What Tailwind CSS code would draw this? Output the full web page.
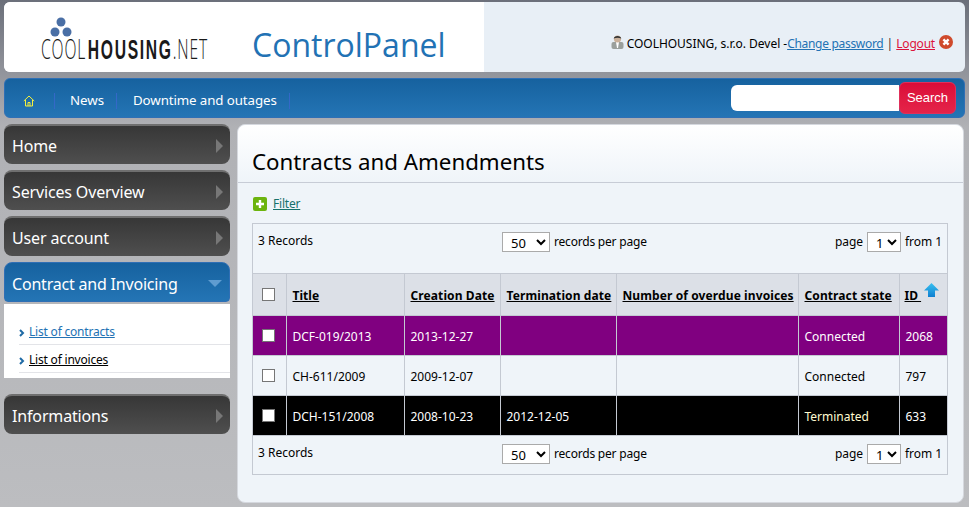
<!DOCTYPE html>
<html><head><meta charset="utf-8"><script src="https://cdn.jsdelivr.net/npm/@tailwindcss/browser@4"></script></head>
<body class="m-0 h-[507px] w-[969px] overflow-hidden bg-gradient-to-b from-[#6b6f7a] via-[#b0b1b5] via-[25%] to-[#bcbdc0] font-['Noto_Sans',sans-serif] text-[12px] text-black">
<div class="px-1 pt-0.5">
  <header class="flex h-[70px] overflow-hidden rounded-md bg-[#e8eff6]">
    <div class="relative flex w-[480px] shrink-0 items-start bg-white">
      <div class="relative ml-[37px] mt-[16px] h-[46px] w-[170px]">
        <svg class="absolute left-[8px] top-[-1px]" width="24" height="22" viewBox="0 0 24 22"><circle cx="12" cy="5" r="4.5" fill="#4a6fa5"/><circle cx="6" cy="15" r="4.5" fill="#4a6fa5"/><circle cx="18" cy="15" r="4.5" fill="#4a6fa5"/></svg>
        <div class="absolute left-0 top-[12px] origin-left scale-x-[0.56] whitespace-nowrap font-['Open_Sans',sans-serif] text-[28px] font-light leading-[36px] tracking-[1.5px] text-[#1a1a1a]">COOL<b class="ml-[3px] font-['Liberation_Sans',sans-serif] font-bold tracking-[3px]">HOUSING</b>.NET</div>
      </div>
      <div class="ml-[41px] mt-[20px] font-['Open_Sans',sans-serif] text-[32px] leading-[46px] text-[#2272b4]">ControlPanel</div>
    </div>
    <div class="flex flex-1 items-start justify-end pr-[12px] pt-[33px]">
      <svg class="mr-[3px] mt-[-1px]" width="13" height="16" viewBox="0 0 13 16"><rect x="0.5" y="8" width="12" height="7" rx="2" fill="#9a9f9c"/><path d="M5 8h3l-1 6h-1z" fill="#fff"/><circle cx="6.5" cy="5" r="3.6" fill="#c9b09a"/><path d="M2.7 4.5C3 1 10 1 10.3 4.5 8 3.4 5 3.4 2.7 4.5Z" fill="#333"/></svg>
      <span class="leading-[17px] tracking-[-0.03px]">COOLHOUSING, s.r.o. Devel -<a class="tracking-[-0.3px] text-[#2272b4] underline">Change password</a> <span class="text-[#333]">|</span> <a class="tracking-[-0.2px] text-[#dc143c] underline">Logout</a></span>
      <svg class="ml-[4px]" width="14" height="14" viewBox="0 0 14 14"><circle cx="7" cy="7" r="7" fill="#cf4a2c"/><path d="M4.4 4.4l5.2 5.2M9.6 4.4l-5.2 5.2" stroke="#fff" stroke-width="2.4"/></svg>
    </div>
  </header>

  <nav class="mt-[6px] flex h-10 items-center justify-between rounded-md border border-[#2f6fb5] bg-gradient-to-b from-[#16629f] to-[#2475b5] pr-2 text-white">
    <ul class="flex items-center pt-[5px] text-[13.3px]">
      <li class="flex h-4 w-[50px] items-center justify-center border-r border-[#3468c8] pr-[2px]">
        <svg width="12" height="12" viewBox="0 0 12 12" fill="none" stroke="#f5f03c" stroke-width="1"><path d="M0.8 6 6 1l5.2 5M2.5 5v6h7V5M5 11V7.5h2V11"/></svg>
      </li>
      <li class="flex h-4 w-[62px] items-center border-r border-[#3468c8] pl-[15px]">News</li>
      <li class="flex h-4 w-[173px] items-center border-r border-[#3468c8] pl-[16px] tracking-[-0.1px]">Downtime and outages</li>
    </ul>
    <div class="flex items-center">
      <input class="h-[26px] w-[168px] rounded-l-md bg-white" type="text" aria-label="Search">
      <button class="h-8 w-[57px] rounded-md border border-[#e0305a] bg-gradient-to-b from-[#da0c38] to-[#e52349] font-['Liberation_Sans',sans-serif] text-[13px] text-white">Search</button>
    </div>
  </nav>

  <div class="mt-[6px] flex gap-[7px]">
    <aside class="w-[226px] shrink-0 text-[16px] tracking-[-0.15px] text-white">
      <a class="flex h-10 items-center justify-between rounded-lg border-t-2 border-[#6f6f6f] bg-gradient-to-b from-[#373737] to-[#4f4f4f] pb-0 pl-2 pr-[7px] pt-px">Home<span class="h-0 w-0 border-y-[7px] border-l-[7px] border-y-transparent border-l-[#777]"></span></a>
      <a class="mt-[6px] flex h-10 items-center justify-between rounded-lg border-t-2 border-[#6f6f6f] bg-gradient-to-b from-[#373737] to-[#4f4f4f] pl-2 pr-[7px] pt-px">Services Overview<span class="h-0 w-0 border-y-[7px] border-l-[7px] border-y-transparent border-l-[#777]"></span></a>
      <a class="mt-[6px] flex h-10 items-center justify-between rounded-lg border-t-2 border-[#6f6f6f] bg-gradient-to-b from-[#373737] to-[#4f4f4f] pl-2 pr-[7px] pt-px">User account<span class="h-0 w-0 border-y-[7px] border-l-[7px] border-y-transparent border-l-[#777]"></span></a>
      <a class="mt-[6px] flex h-10 items-center justify-between rounded-t-lg rounded-b-sm border border-[#2f6fb5] bg-gradient-to-b from-[#16629f] to-[#2475b5] pl-[7px] pr-[7px] pt-[3px] tracking-[-0.2px]">Contract and Invoicing<span class="h-0 w-0 border-x-[7px] border-t-[7px] border-x-transparent border-t-[#5f9cd0]"></span></a>
      <ul class="mt-[2px] h-[74px] bg-white pl-[15px] pt-[13px] text-[12px] tracking-[-0.2px]">
        <li class="flex h-[28px] items-start border-b border-[#e3e4e8] pt-[6px] leading-[17px]"><svg class="mr-[4px] mt-[6px]" width="6" height="8" viewBox="0 0 6 8" fill="none" stroke="#1f6aa5" stroke-width="2"><path d="M1 1l3 3-3 3"/></svg><a class="text-[#2272b4] underline">List of contracts</a></li>
        <li class="flex h-[28px] items-start border-b border-[#e3e4e8] pt-[6px] leading-[17px]"><svg class="mr-[4px] mt-[6px]" width="6" height="8" viewBox="0 0 6 8" fill="none" stroke="#1f6aa5" stroke-width="2"><path d="M1 1l3 3-3 3"/></svg><a class="text-black underline">List of invoices</a></li>
      </ul>
      <a class="mt-4 flex h-10 items-center justify-between rounded-lg border-t-2 border-[#6f6f6f] bg-gradient-to-b from-[#373737] to-[#4f4f4f] pl-2 pr-[7px] pt-px">Informations<span class="h-0 w-0 border-y-[7px] border-l-[7px] border-y-transparent border-l-[#777]"></span></a>
    </aside>

    <main class="h-[379px] w-[727px] rounded-lg border border-[#d5d8de] bg-[#eff4f9]">
      <div class="h-[58px] rounded-t-lg border-b border-[#c7ccd6] bg-gradient-to-b from-white to-[#eff4f9] pl-[14px] pt-[20px] text-[22.3px] leading-[34px]">Contracts and Amendments</div>
      <div class="ml-[15px] mt-[13px] flex h-4 items-center">
        <svg width="14" height="14" viewBox="0 0 14 14"><rect width="14" height="14" rx="2" fill="#6cb40e"/><path d="M7 3v8M3 7h8" stroke="#fff" stroke-width="2.4"/></svg>
        <a class="ml-[6px] tracking-[-0.2px] text-[#17716b] underline">Filter</a>
      </div>
      <div class="ml-[14px] mt-[11px] w-[696px] border border-[#c4c9d2]">
        <div class="flex h-[49px] items-start justify-between pl-[5px] pr-[5px] pt-[8px]">
          <span class="w-[244px] leading-[18px]">3 Records</span>
          <div class="flex items-center"><select class="h-[20px] w-[48px] border border-[#aaa] bg-white pl-[4px] text-[13px]" aria-label="Records per page"><option>50</option></select><span class="ml-[4px] tracking-[-0.2px]">records per page</span></div>
          <div class="ml-auto flex items-center tracking-[-0.05px]">page <select class="mx-[4px] h-[20px] w-[34px] border border-[#aaa] bg-white pl-[4px] text-[13px]" aria-label="Page"><option>1</option></select> from 1</div>
        </div>
        <table class="w-full table-fixed border-collapse">
          <colgroup><col class="w-[33px]"><col class="w-[118px]"><col class="w-[96px]"><col class="w-[116px]"><col class="w-[182px]"><col class="w-[101px]"><col></colgroup>
          <thead class="bg-[#dce0e7] font-bold">
            <tr class="h-[42px] border-y border-[#c4c9d2]">
              <th class="border-r border-[#c4c9d2] pr-[2px] text-center align-middle"><input type="checkbox" class="size-[13px] -translate-y-px appearance-none border border-[#767676] bg-white align-middle" aria-label="Select all"></th>
              <th class="border-r border-[#c4c9d2] pl-[6px] pt-[2px] text-left tracking-[0.05px]"><u>Title</u></th>
              <th class="border-r border-[#c4c9d2] pl-[6px] pt-[2px] text-left tracking-[0.1px]"><u>Creation Date</u></th>
              <th class="border-r border-[#c4c9d2] pl-[6px] pt-[2px] text-left tracking-[0.1px]"><u>Termination date</u></th>
              <th class="border-r border-[#c4c9d2] pl-[6px] pt-[2px] text-left tracking-[0.1px]"><u>Number of overdue invoices</u></th>
              <th class="border-r border-[#c4c9d2] pl-[6px] pt-[2px] text-left tracking-[0.1px]"><u>Contract state</u></th>
              <th class="pl-[5px] pt-[2px] text-left"><span class="inline-flex items-start"><u>ID&nbsp;</u><svg class="ml-[3px] mt-[-4px]" width="15" height="15" viewBox="0 0 15 15"><defs><linearGradient id="a" x1="0" x2="0" y1="0" y2="1"><stop offset="0" stop-color="#38c0f0"/><stop offset="1" stop-color="#0f7fd0"/></linearGradient></defs><path d="M7.5 0 15 7.5h-4V14H4V7.5H0Z" fill="url(#a)"/></svg></span></th>
            </tr>
          </thead>
          <tbody>
            <tr class="h-10 border-b border-[#c4c9d2] bg-[#800080] text-white">
              <td class="border-r border-[#c4c9d2] pr-[2px] text-center"><input type="checkbox" class="size-[13px] -translate-y-px appearance-none border border-[#767676] bg-white align-middle" aria-label="Select"></td>
              <td class="border-r border-[#c4c9d2] pl-[6px] pt-[2px]">DCF-019/2013</td><td class="border-r border-[#c4c9d2] pl-[6px] pt-[2px]">2013-12-27</td><td class="border-r border-[#c4c9d2]"></td><td class="border-r border-[#c4c9d2]"></td><td class="border-r border-[#c4c9d2] pl-[6px] pt-[2px]">Connected</td><td class="pl-[6px] pt-[2px]">2068</td>
            </tr>
            <tr class="h-10 border-b border-[#c4c9d2]">
              <td class="border-r border-[#c4c9d2] pr-[2px] text-center"><input type="checkbox" class="size-[13px] -translate-y-px appearance-none border border-[#767676] bg-white align-middle" aria-label="Select"></td>
              <td class="border-r border-[#c4c9d2] pl-[6px] pt-[2px]">CH-611/2009</td><td class="border-r border-[#c4c9d2] pl-[6px] pt-[2px]">2009-12-07</td><td class="border-r border-[#c4c9d2]"></td><td class="border-r border-[#c4c9d2]"></td><td class="border-r border-[#c4c9d2] pl-[6px] pt-[2px]">Connected</td><td class="pl-[6px] pt-[2px]">797</td>
            </tr>
            <tr class="h-10 border-b border-[#c4c9d2] bg-black text-white">
              <td class="border-r border-[#c4c9d2] pr-[2px] text-center"><input type="checkbox" class="size-[13px] -translate-y-px appearance-none border border-[#767676] bg-white align-middle" aria-label="Select"></td>
              <td class="border-r border-[#c4c9d2] pl-[6px] pt-[2px]">DCH-151/2008</td><td class="border-r border-[#c4c9d2] pl-[6px] pt-[2px]">2008-10-23</td><td class="border-r border-[#c4c9d2] pl-[6px] pt-[2px]">2012-12-05</td><td class="border-r border-[#c4c9d2]"></td><td class="border-r border-[#c4c9d2] pl-[6px] pt-[2px] text-[#fffbd0]">Terminated</td><td class="pl-[6px] pt-[2px]">633</td>
            </tr>
          </tbody>
        </table>
        <div class="flex h-[38px] items-start justify-between pl-[5px] pr-[5px] pt-[8px]">
          <span class="w-[244px] leading-[18px]">3 Records</span>
          <div class="flex items-center"><select class="h-[20px] w-[48px] border border-[#aaa] bg-white pl-[4px] text-[13px]" aria-label="Records per page"><option>50</option></select><span class="ml-[4px] tracking-[-0.2px]">records per page</span></div>
          <div class="ml-auto flex items-center tracking-[-0.05px]">page <select class="mx-[4px] h-[20px] w-[34px] border border-[#aaa] bg-white pl-[4px] text-[13px]" aria-label="Page"><option>1</option></select> from 1</div>
        </div>
      </div>
    </main>
  </div>
</div>
</body></html>
